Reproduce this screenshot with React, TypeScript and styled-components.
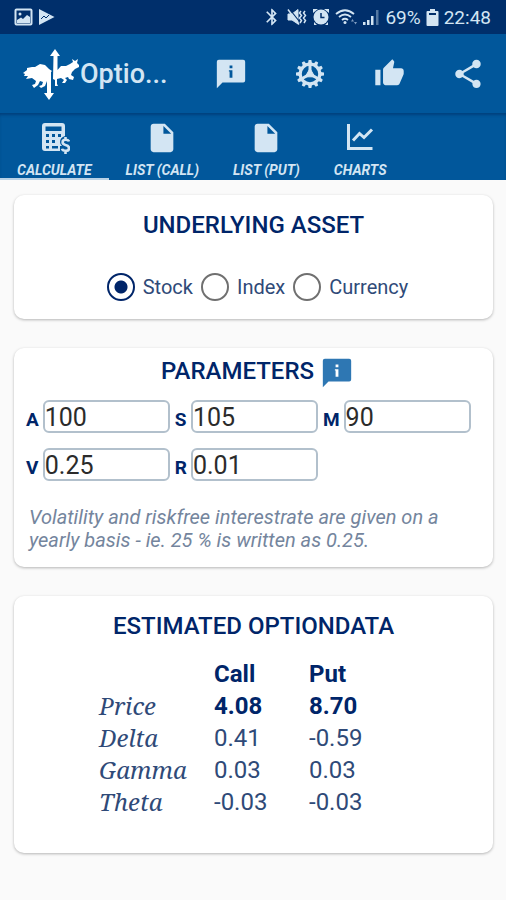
import React, { useState } from "react";
import styled, { createGlobalStyle, css } from "styled-components";
import { MdBluetooth, MdInsertDriveFile, MdShare, MdThumbUp } from "react-icons/md";

const navy = "#002569";
const slate = "#2f4a78";
const pale = "#d3e5f3";

const GlobalStyle = createGlobalStyle`
  * { box-sizing: border-box; }
  body {
    margin: 0;
    background: #fafafa;
    color: ${navy};
    font-family: Roboto, "Liberation Sans", sans-serif;
  }
  button, input { font: inherit; }
`;

const Screen = styled.div`
  display: flex;
  flex-direction: column;
  min-height: 100vh;
`;

const StatusBar = styled.div`
  display: flex;
  justify-content: space-between;
  align-items: center;
  height: 34px;
  padding: 0 15px 0 14px;
  background: #002f6b;
  color: ${pale};
  font-size: 19px;
`;

const StatusGroup = styled.div`
  display: flex;
  align-items: center;
  gap: 5px;
  svg { display: block; }
`;

const AppBar = styled.header`
  display: flex;
  align-items: center;
  justify-content: space-between;
  height: 79px;
  padding: 0 16px 0 22px;
  background: #01579b;
  color: ${pale};
`;

const Brand = styled.div`
  display: flex;
  align-items: center;
`;

const AppName = styled.h1`
  margin: 0;
  font-size: 27px;
  font-weight: 500;
`;

const Actions = styled.div`
  display: flex;
  gap: 35px;
`;

const IconButton = styled.button`
  display: grid;
  place-items: center;
  width: 44px;
  height: 44px;
  padding: 0;
  border: 0;
  background: none;
  color: inherit;
`;

const InlineIconButton = styled(IconButton)`
  width: 34px;
  height: 30px;
  color: #2e77b3;
`;

const TabBar = styled.nav`
  display: flex;
  height: 67px;
  background: #01579b;
  box-shadow: inset 0 3px 3px -1px #00407c;
`;

const Tab = styled.button<{ $active: boolean }>`
  display: flex;
  flex-direction: column;
  align-items: center;
  justify-content: flex-end;
  gap: 8px;
  padding: 0 17px;
  border: 0;
  border-bottom: 2px solid ${(p) => (p.$active ? "#b9d2e6" : "transparent")};
  background: none;
  color: ${pale};
  font-size: 14px;
  font-weight: 700;
  font-style: italic;
  line-height: 15px;
  white-space: nowrap;
`;

const Content = styled.main`
  display: flex;
  flex-direction: column;
  gap: 29px;
  padding: 15px 13px 40px 14px;
`;

const Card = styled.section<{ $bottom: number }>`
  padding: 8px 12px ${(p) => p.$bottom}px;
  border-radius: 10px;
  background: #fff;
  box-shadow: 0 1px 3px rgba(0, 0, 0, 0.28);
`;

const CardTitle = styled.h2`
  display: flex;
  align-items: center;
  justify-content: center;
  gap: 6px;
  min-height: 44px;
  margin: 0;
  font-size: 24px;
  font-weight: 500;
`;

const ParamTitle = styled(CardTitle)`
  min-height: 30px;
  padding-left: 8px;
`;

const Choices = styled.div`
  display: flex;
  justify-content: center;
  gap: 8px;
  padding: 26px 0 0 8px;
`;

const Choice = styled.label`
  display: flex;
  align-items: center;
  gap: 8px;
  color: ${slate};
  font-size: 20px;
`;

const Radio = styled.input`
  appearance: none;
  width: 28px;
  height: 28px;
  margin: 0;
  border: 2px solid #707070;
  border-radius: 50%;
  &:checked {
    border-color: ${navy};
    background: radial-gradient(circle, ${navy} 0 6px, transparent 7px);
  }
`;

const Fields = styled.div`
  display: grid;
  grid-template-columns: repeat(3, auto);
  justify-content: start;
  gap: 15px 5px;
  padding-top: 14px;
`;

const Field = styled.label`
  display: flex;
  align-items: baseline;
  justify-content: space-between;
  gap: 4px;
  font-size: 19px;
  font-weight: 700;
`;

const NumberBox = styled.input`
  width: 127px;
  height: 33px;
  padding: 2px 0 0;
  border: 2px solid #b2c0cc;
  border-radius: 6px;
  background: #fff;
  color: #2b2b2b;
  font-size: 25px;
  font-weight: 400;
`;

const Note = styled.p`
  margin: 25px 30px 0 3px;
  color: #74859d;
  font-size: 20px;
  font-style: italic;
  line-height: 23px;
`;

const Results = styled.table`
  margin: 10px 0 0 73px;
  border-collapse: collapse;
  color: ${slate};
  font-size: 24px;
  th, td {
    height: 32px;
    padding: 0;
    text-align: left;
    line-height: 32px;
  }
`;

const ColumnHead = styled.th<{ $width: number }>`
  width: ${(p) => p.$width}px;
  color: ${navy};
  font-weight: 700;
`;

const RowHead = styled.th`
  font-family: "Noto Serif", "Liberation Serif", serif;
  font-size: 24px;
  font-style: italic;
  font-weight: 400;
`;

const Value = styled.td<{ $strong: boolean }>`
  ${(p) =>
    p.$strong &&
    css`
      color: ${navy};
      font-weight: 700;
    `}
`;

const InfoIcon = () => (
  <svg width="34" height="34" viewBox="0 0 24 24" fill="currentColor" fillRule="evenodd" aria-hidden="true">
    <path d="M3.4 2H20.6Q22 2 22 3.4V16.6Q22 18 20.6 18H6L2 22V3.4Q2 2 3.4 2ZM11 6v2h2V6ZM10.5 9.3v1h.5v4.3H13V9.3Z" />
  </svg>
);

const GearIcon = () => (
  <svg width="30" height="30" viewBox="0 0 30 30" fill="none" stroke="currentColor" aria-hidden="true">
    <circle cx="15" cy="15" r="9.8" strokeWidth="3.2" />
    {Array.from({ length: 12 }, (_, i) => (
      <path key={i} d="M13 4.5 13.6 1h2.8l.6 3.5Z" fill="currentColor" stroke="none" transform={`rotate(${i * 30} 15 15)`} />
    ))}
    <path d="M15 5v10M15 15l-8.7 5M15 15l8.7 5" strokeWidth="3" />
    <path d="M15 9.5 19.8 17.8H10.2Z" fill="currentColor" strokeWidth="1" strokeLinejoin="round" />
  </svg>
);

const CalculatorIcon = () => (
  <svg width="31" height="33" viewBox="-2 0 31 33" fill="none" stroke="currentColor" aria-hidden="true">
    <path
      fill="currentColor"
      stroke="none"
      fillRule="evenodd"
      d="M4 1H21Q24 1 24 4V14Q19 15.500 19 20 19 22.500 21 24H19V29H4Q1 29 1 26V4Q1 1 4 1ZM4.500 4.500V9H20.500V4.500ZM5 12V15H8V12ZM11 12V15H14V12ZM17 12V15H20V12ZM5 18V21H8V18ZM11 18V21H14V18ZM5 24V26.500H8V24ZM11 24V26.500H17V24Z"
    />
    <path strokeWidth="2.600" d="M28 19.500Q27.500 17.800 24.500 17.800 21.600 17.800 21.600 20.200 21.600 22.200 24.500 22.900 28 23.600 28 26.200 28 28.800 24.500 28.800 21.500 28.800 21 26.800M24.500 15V18M24.500 28.500V32" />
  </svg>
);

const ChartIcon = () => (
  <svg width="28" height="32" viewBox="0 0 28 32" fill="none" stroke="currentColor" strokeWidth="3" aria-hidden="true">
    <path d="M2.500 1V25.500H26.500M7 17.500 13.500 10.500 18 14.500 26 6.500" />
  </svg>
);

const Logo = () => (
  <svg width="58" height="54" viewBox="0 0 58 54" fill="#fff" aria-hidden="true">
    <path d="M30 24 27 22 23 18 18 17 13 20 10 20 5 21 5 23 1 26 3 27 2 29 6 29 4 32 10 31 14 34 13 37 10 38 12 41 16 38 18 34 21 35 20 38 17 39 19 41 23 39 25 34 25 35V46H22L27 53 32 46H29V25Z" />
    <path d="M31.500 9H28L33 2 38 9H35.500V23L39 19 44 19 48 17 51 15 50 12 53 14 56 12 55 16 57 18 57 20 53 22 50 25 49 28 52 30 51 33 47 32 46 30 43 31 45 33 43 36 40 36 42 33 39 31 35 32 35 37 36 39 33 39 33 33 31 32Z" />
  </svg>
);

const PictureIcon = () => (
  <svg width="19" height="18" viewBox="0 0 19 18" aria-hidden="true">
    <rect x="1.500" y="1.500" width="16" height="15" rx="1" fill="none" stroke="currentColor" strokeWidth="2" />
    <path d="M3 15V12L7 9.500 9 11 13 7 16 9V15Z" fill="currentColor" />
    <circle cx="6" cy="6" r="1.500" fill="currentColor" />
  </svg>
);

const PlayIcon = () => (
  <svg width="17" height="18" viewBox="0 0 17 18" aria-hidden="true">
    <path d="M1 1 16.500 9 1 17Z" fill="currentColor" />
    <path d="M3 11 6 8 8 10 11 7" fill="none" stroke="#002f6b" />
  </svg>
);

const MuteIcon = () => (
  <svg width="20" height="18" viewBox="0 0 20 18" fill="none" stroke="currentColor" aria-hidden="true">
    <path d="M1 6H5L11 1.500V16L5 12H1Z" fill="currentColor" />
    <path d="M2.500 1 14 15.500" stroke="#002f6b" strokeWidth="1.200" />
    <path d="M1 1.500 12 16.500" strokeWidth="1.500" />
    <path d="M14 3 12.500 5 14.500 7.500 12.500 10 14.500 12.500 13 15M18 3 16.500 5 18.500 7.500 16.500 10 18.500 12.500 17 15" strokeWidth="1.500" />
  </svg>
);

const AlarmIcon = () => (
  <svg width="18" height="18" viewBox="0 0 18 18" fill="currentColor" aria-hidden="true">
    <path d="M1 5V1H6ZM17 5V1H12ZM2 17V14L5 17ZM16 17V14L13 17Z" />
    <circle cx="9" cy="9" r="7.500" />
    <path d="M9 5V9.500H12.500" fill="none" stroke="#002f6b" strokeWidth="1.500" />
  </svg>
);

const WifiIcon = () => (
  <svg width="22" height="18" viewBox="0 0 22 18" fill="none" stroke="currentColor" strokeWidth="1.800" aria-hidden="true">
    <path d="M1 6Q10 -1.500 19 6M4 9Q10 4 16 9M7 12Q10 9.500 13 12" />
    <circle cx="10" cy="14.500" r="1.500" fill="currentColor" stroke="none" />
    <path d="M16 13.500 17.500 11 19 13.500ZM19 14 20.500 16.500 22 14Z" fill="#7f9cc0" stroke="none" />
  </svg>
);

const SignalIcon = () => (
  <svg width="18" height="18" viewBox="0 0 18 18" fill="currentColor" aria-hidden="true">
    <path d="M1 14H3.500V17H1ZM5 12H7.500V17H5ZM9 8H11.500V17H9Z" />
    <path d="M14 2H16.500V17H14Z" opacity="0.400" />
  </svg>
);

const BatteryIcon = () => (
  <svg width="13" height="19" viewBox="0 0 13 19" aria-hidden="true">
    <path d="M4 1H9V3H11.500Q12.500 3 12.500 4V17Q12.500 18 11.500 18H1.500Q.5 18 .5 17V4Q.5 3 1.500 3H4Z" fill="currentColor" />
    <path d="M3 5H10V7H3Z" fill="#002f6b" />
  </svg>
);

const tabs = [
  { label: "CALCULATE", icon: <CalculatorIcon /> },
  { label: "LIST (CALL)", icon: <MdInsertDriveFile size={34} /> },
  { label: "LIST (PUT)", icon: <MdInsertDriveFile size={34} /> },
  { label: "CHARTS", icon: <ChartIcon /> },
];

const parameters = [
  ["A", "100"],
  ["S", "105"],
  ["M", "90"],
  ["V", "0.25"],
  ["R", "0.01"],
];

const results = [
  ["Price", "4.08", "8.70"],
  ["Delta", "0.41", "-0.59"],
  ["Gamma", "0.03", "0.03"],
  ["Theta", "-0.03", "-0.03"],
];

export default function App() {
  const [tab, setTab] = useState("CALCULATE");
  return (
    <Screen>
      <GlobalStyle />
      <StatusBar>
        <StatusGroup>
          <PictureIcon />
          <PlayIcon />
        </StatusGroup>
        <StatusGroup>
          <MdBluetooth size={20} />
          <MuteIcon />
          <AlarmIcon />
          <WifiIcon />
          <SignalIcon />
          <span>69%</span>
          <BatteryIcon />
          <span>22:48</span>
        </StatusGroup>
      </StatusBar>
      <AppBar>
        <Brand>
          <Logo />
          <AppName>Optio...</AppName>
        </Brand>
        <Actions>
          <IconButton aria-label="Information"><InfoIcon /></IconButton>
          <IconButton aria-label="Settings"><GearIcon /></IconButton>
          <IconButton aria-label="Rate"><MdThumbUp size={31} /></IconButton>
          <IconButton aria-label="Share"><MdShare size={34} /></IconButton>
        </Actions>
      </AppBar>
      <TabBar>
        {tabs.map(({ label, icon }) => (
          <Tab key={label} $active={label === tab} onClick={() => setTab(label)}>
            {icon}
            {label}
          </Tab>
        ))}
      </TabBar>
      <Content>
        <Card $bottom={18}>
          <CardTitle>UNDERLYING ASSET</CardTitle>
          <Choices>
            {["Stock", "Index", "Currency"].map((name) => (
              <Choice key={name}>
                <Radio type="radio" name="asset" defaultChecked={name === "Stock"} />
                {name}
              </Choice>
            ))}
          </Choices>
        </Card>
        <Card $bottom={15}>
          <ParamTitle>
            PARAMETERS
            <InlineIconButton aria-label="About parameters"><InfoIcon /></InlineIconButton>
          </ParamTitle>
          <Fields>
            {parameters.map(([name, value]) => (
              <Field key={name}>
                {name}
                <NumberBox inputMode="decimal" defaultValue={value} />
              </Field>
            ))}
          </Fields>
          <Note>Volatility and riskfree interestrate are given on a yearly basis - ie. 25 % is written as 0.25.</Note>
        </Card>
        <Card $bottom={35}>
          <CardTitle>ESTIMATED OPTIONDATA</CardTitle>
          <Results>
            <thead>
              <tr>
                <ColumnHead $width={115} as="td" />
                <ColumnHead $width={95}>Call</ColumnHead>
                <ColumnHead $width={95}>Put</ColumnHead>
              </tr>
            </thead>
            <tbody>
              {results.map(([name, call, put]) => (
                <tr key={name}>
                  <RowHead scope="row">{name}</RowHead>
                  <Value $strong={name === "Price"}>{call}</Value>
                  <Value $strong={name === "Price"}>{put}</Value>
                </tr>
              ))}
            </tbody>
          </Results>
        </Card>
      </Content>
    </Screen>
  );
}
